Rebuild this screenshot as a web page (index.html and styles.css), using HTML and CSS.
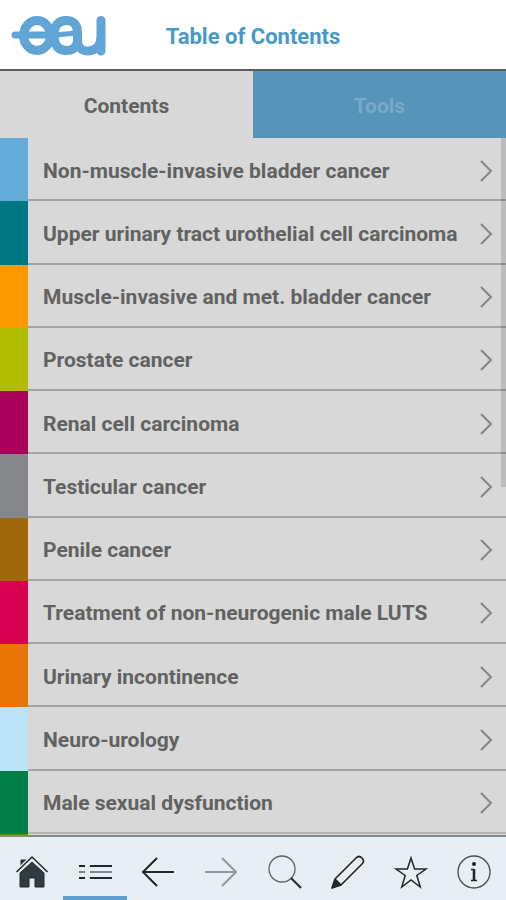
FILE: index.html
```html
<!DOCTYPE html>
<html lang="en">
<head>
<meta charset="utf-8">
<meta name="viewport" content="width=device-width, initial-scale=1">
<title>Table of Contents</title>
<link rel="stylesheet" href="styles.css">
</head>
<body>
<header class="header">
  <svg class="logo" viewBox="0 0 96 40" role="img" aria-label="eau">
    <g fill="none" stroke="currentColor" stroke-width="9" stroke-linecap="round" stroke-linejoin="round">
      <path stroke-width="7" d="M4 19H41"/>
      <ellipse cx="26" cy="19.500" rx="13.500" ry="15"/>
      <path d="M43 19C43 9 48 4.500 55 4.500C63 4.500 66.500 9 66.500 17V25C66.500 31 71 35 77 35C85 35 90 29 90 20V4.500V35"/>
      <path d="M43 19C43 29 47 34.500 55 34.500C62 34.500 66 31 66.500 25"/>
      <path stroke-width="5" d="M44 20C50 17 60 19 66 16"/>
    </g>
  </svg>
  <h1 class="title">Table of Contents</h1>
</header>
<div class="tabs" role="tablist">
  <button class="tab tab-active" type="button" role="tab" aria-selected="true">Contents</button>
  <button class="tab" type="button" role="tab" aria-selected="false">Tools</button>
</div>
<main class="contents">
  <ul class="topics">
    <li class="topic sky"><a href="#">Non-muscle-invasive bladder cancer<svg class="chevron" viewBox="0 0 14 24"><path d="M2 2L12 12L2 22"/></svg></a></li>
    <li class="topic teal"><a href="#">Upper urinary tract urothelial cell carcinoma<svg class="chevron" viewBox="0 0 14 24"><path d="M2 2L12 12L2 22"/></svg></a></li>
    <li class="topic amber"><a href="#">Muscle-invasive and met. bladder cancer<svg class="chevron" viewBox="0 0 14 24"><path d="M2 2L12 12L2 22"/></svg></a></li>
    <li class="topic lime"><a href="#">Prostate cancer<svg class="chevron" viewBox="0 0 14 24"><path d="M2 2L12 12L2 22"/></svg></a></li>
    <li class="topic plum"><a href="#">Renal cell carcinoma<svg class="chevron" viewBox="0 0 14 24"><path d="M2 2L12 12L2 22"/></svg></a></li>
    <li class="topic gray"><a href="#">Testicular cancer<svg class="chevron" viewBox="0 0 14 24"><path d="M2 2L12 12L2 22"/></svg></a></li>
    <li class="topic brown"><a href="#">Penile cancer<svg class="chevron" viewBox="0 0 14 24"><path d="M2 2L12 12L2 22"/></svg></a></li>
    <li class="topic red"><a href="#">Treatment of non-neurogenic male LUTS<svg class="chevron" viewBox="0 0 14 24"><path d="M2 2L12 12L2 22"/></svg></a></li>
    <li class="topic orange"><a href="#">Urinary incontinence<svg class="chevron" viewBox="0 0 14 24"><path d="M2 2L12 12L2 22"/></svg></a></li>
    <li class="topic ice"><a href="#">Neuro-urology<svg class="chevron" viewBox="0 0 14 24"><path d="M2 2L12 12L2 22"/></svg></a></li>
    <li class="topic green"><a href="#">Male sexual dysfunction<svg class="chevron" viewBox="0 0 14 24"><path d="M2 2L12 12L2 22"/></svg></a></li>
    <li class="next-topic"></li>
  </ul>
  <div class="scrollbar"></div>
</main>
<nav class="toolbar" aria-label="Main">
  <button class="tool" type="button" aria-label="Home">
    <svg class="icon" viewBox="0 0 36 36"><path fill="#303a42" d="M7 6h5v3L7 14zM18 8L30 19V33H21V24H15V33H6V19z"/><path d="M2.500 18L18 3L33.500 18" stroke="#e8eff3" stroke-width="4"/><path d="M2.500 18L18 3L33.500 18" stroke-width="1.500"/></svg>
  </button>
  <button class="tool tool-active" type="button" aria-label="Contents" aria-current="page">
    <svg class="icon" viewBox="0 0 36 36"><path stroke-width="2" d="M2 12h6M13 12h22M2 24h6M13 24h22"/><path stroke="#7f878c" stroke-width="2" d="M2 18h6M13 18h22"/></svg>
  </button>
  <button class="tool" type="button" aria-label="Back">
    <svg class="icon" viewBox="0 0 36 36"><path stroke-width="2" d="M34 18H3M17 4L3 18L17 32"/></svg>
  </button>
  <button class="tool tool-muted" type="button" aria-label="Forward">
    <svg class="icon" viewBox="0 0 36 36"><path stroke-width="2" d="M2 18H33M19 4L33 18L19 32"/></svg>
  </button>
  <button class="tool" type="button" aria-label="Search">
    <svg class="icon" viewBox="0 0 36 36"><circle cx="15" cy="15" r="13" stroke="#5b6369" stroke-width="1.300"/><path stroke-width="2" d="M24 24L34 34"/></svg>
  </button>
  <button class="tool" type="button" aria-label="Notes">
    <svg class="icon" viewBox="0 0 36 36"><path stroke-width="1.700" stroke-linejoin="round" d="M2 34L5 25L26 4Q29 1 32 4Q35 7 32 10L11 31zM5 25L11 31"/><path fill="#20282d" d="M2 34L5 26L10 31z"/></svg>
  </button>
  <button class="tool" type="button" aria-label="Favorites">
    <svg class="icon" viewBox="0 0 36 36"><path stroke-width="1.500" d="M18 4L21.600 15H33L23.800 21.500L27.300 33L18 26L8.700 33L12.200 21.500L3 15H14.400z"/></svg>
  </button>
  <button class="tool" type="button" aria-label="Info">
    <svg class="icon" viewBox="0 0 36 36"><circle cx="18" cy="18" r="16" stroke="#4a5257" stroke-width="1.400"/><circle cx="18" cy="10" r="2" fill="#20282d" stroke="none"/><path stroke-width="2.600" d="M18 15V27"/><path stroke-width="1.300" d="M15 15.500H18M15 26.500H21"/></svg>
  </button>
</nav>
</body>
</html>
```
FILE: styles.css
```css
* {
  box-sizing: border-box;
}

body {
  margin: 0;
  height: 100vh;
  display: flex;
  flex-direction: column;
  background: #d8d8d8;
  color: #626262;
  font-family: Roboto, "Liberation Sans", sans-serif;
  font-size: 21px;
  font-weight: 700;
}

button {
  padding: 0;
  border: 0;
  background: none;
  font: inherit;
}

.header {
  position: relative;
  flex: none;
  display: flex;
  align-items: center;
  justify-content: center;
  padding: 24px 0 19px;
  border-bottom: 2px solid #5e5c5e;
  background: #fff;
}

.logo {
  position: absolute;
  left: 11px;
  top: 16px;
  width: 96px;
  color: #60a5d5;
}

.title {
  margin: 0;
  color: #4799ca;
  font-size: 22px;
  font-weight: 700;
  line-height: 26px;
}

.tabs {
  flex: none;
  display: grid;
  grid-template-columns: 1fr 1fr;
}

.tab {
  padding: 22px 0 19px;
  background: #5694b9;
  color: #79aac9;
  line-height: 26px;
}

.tab-active {
  background: #d8d8d8;
  color: #626262;
}

.contents {
  position: relative;
  flex: 1;
  display: flex;
  border-bottom: 2px solid #858788;
}

.topics {
  flex: 1;
  display: flex;
  flex-direction: column;
  margin: 0;
  padding: 0;
  list-style: none;
}

.topic {
  flex: 1;
  display: flex;
  border-left: 28px solid;
}

.topic a {
  flex: 1;
  display: flex;
  align-items: center;
  justify-content: space-between;
  padding: 4px 13px 0 15px;
  border-bottom: 2px solid #a4a4a4;
  color: #626262;
  text-decoration: none;
}

.topic:nth-child(11) a {
  border-bottom-color: #b4b4b4;
}

.next-topic {
  height: 1px;
  border-left: 28px solid #5e8a00;
}

.sky { border-color: #65acdb; }
.teal { border-color: #007783; }
.amber { border-color: #fa9a00; }
.lime { border-color: #b1bd00; }
.plum { border-color: #a9005c; }
.gray { border-color: #85878a; }
.brown { border-color: #a1680b; }
.red { border-color: #d90050; }
.orange { border-color: #e87506; }
.ice { border-color: #bce4f8; }
.green { border-color: #007f49; }

.chevron {
  width: 14px;
  height: 24px;
  fill: none;
  stroke: #858585;
  stroke-width: 2;
}

.scrollbar {
  position: absolute;
  top: 0;
  right: 0;
  width: 5px;
  height: 50%;
  background: rgba(0, 0, 0, 0.13);
}

.toolbar {
  flex: none;
  display: grid;
  grid-template-columns: repeat(8, 1fr);
  background: #e8eff3;
}

.tool {
  display: flex;
  justify-content: center;
  padding: 17px 0 6px;
  border-bottom: 4px solid transparent;
  color: #20282d;
}

.tool-active {
  border-bottom-color: #5ba0cf;
}

.tool-muted {
  color: #92999d;
}

.icon {
  width: 36px;
  height: 36px;
  fill: none;
  stroke: currentColor;
}
```
